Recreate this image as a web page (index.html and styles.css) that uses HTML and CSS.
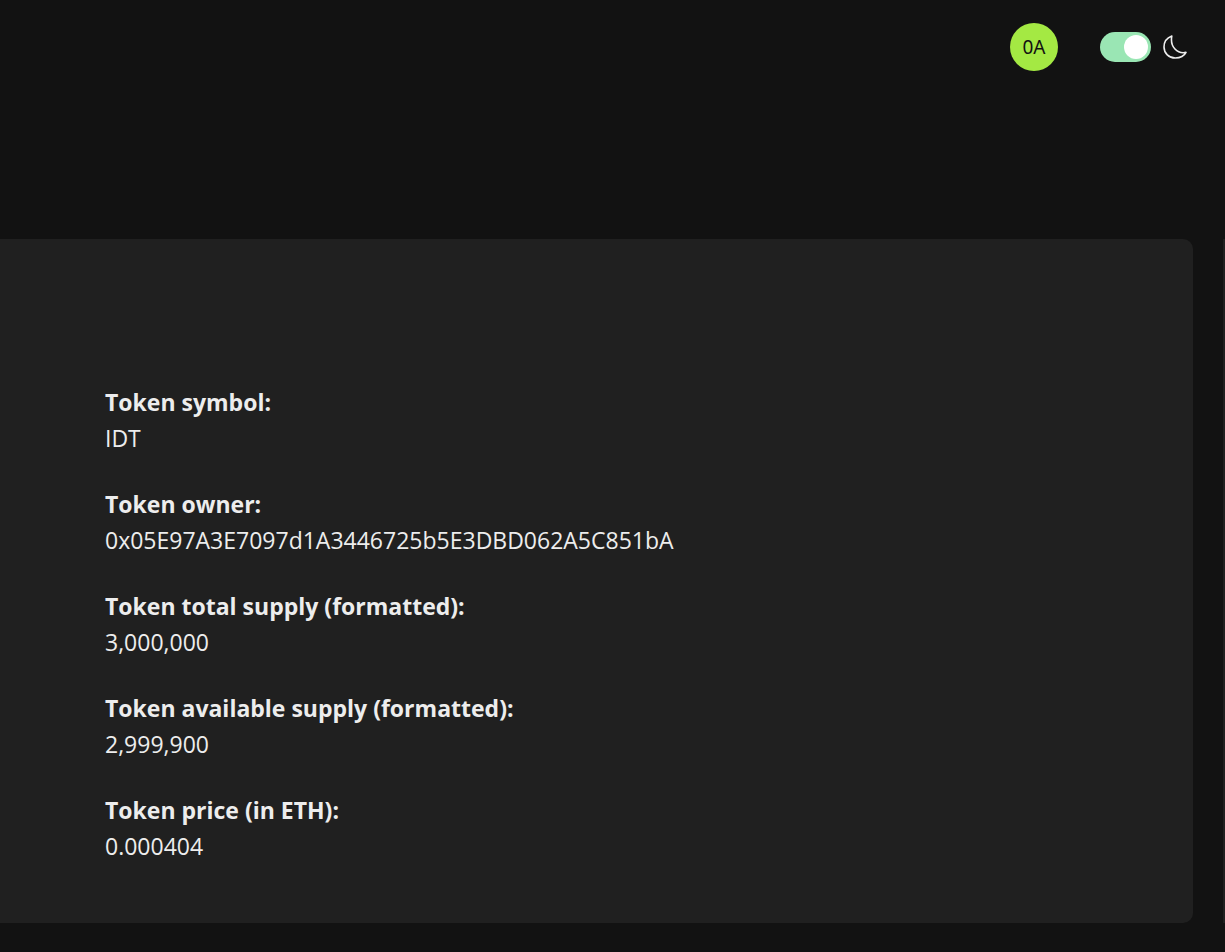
FILE: index.html
```html
<!DOCTYPE html>
<html lang="en">
<head>
<meta charset="utf-8">
<meta name="viewport" content="width=device-width, initial-scale=1">
<title>Token details</title>
<link rel="stylesheet" href="styles.css">
</head>
<body>
<header class="topbar">
  <button class="avatar" type="button">0A</button>
  <label class="theme">
    <input class="switch" type="checkbox" role="switch" aria-label="Dark theme" checked>
    <svg class="moon" viewBox="0 0 24 24" aria-hidden="true"><path d="M8.800 1C4 2.800 1 7 1 12C1 18.200 6 23 12.200 23C17 23 21.200 21 23 17.400C14.500 19.200 6.800 12 8.800 1Z"/></svg>
  </label>
</header>
<main class="slides">
  <section class="card">
    <dl class="facts">
      <div><dt>Token symbol:</dt><dd>IDT</dd></div>
      <div><dt>Token owner:</dt><dd>0x05E97A3E7097d1A3446725b5E3DBD062A5C851bA</dd></div>
      <div><dt>Token total supply (formatted):</dt><dd>3,000,000</dd></div>
      <div><dt>Token available supply (formatted):</dt><dd>2,999,900</dd></div>
      <div><dt>Token price (in ETH):</dt><dd>0.000404</dd></div>
    </dl>
  </section>
  <div class="next-card"></div>
</main>
</body>
</html>
```
FILE: styles.css
```css
* { box-sizing: border-box; }
body {
  margin: 0;
  min-height: 100vh;
  background: #121212;
  color: #ededed;
  font-family: "Segoe UI", "Open Sans", "Noto Sans", sans-serif;
}
.topbar {
  display: flex;
  justify-content: flex-end;
  align-items: center;
  gap: 42px;
  padding: 23px 38px 0 0;
}
.avatar {
  width: 48px;
  height: 48px;
  padding: 0;
  border: 0;
  border-radius: 50%;
  background: #a4e943;
  color: #121212;
  font: 400 19px "Noto Sans", sans-serif;
}
.theme {
  display: flex;
  align-items: center;
  gap: 12px;
}
.switch {
  appearance: none;
  display: flex;
  justify-content: flex-end;
  width: 51px;
  height: 30px;
  margin: 0;
  padding: 3px;
  border-radius: 15px;
  background: #9ae6b4;
}
.switch::before {
  content: "";
  width: 24px;
  height: 24px;
  border-radius: 50%;
  background: #fff;
}
.moon {
  width: 24px;
  height: 24px;
  fill: none;
  stroke: #ededed;
  stroke-width: 1.6;
  stroke-linejoin: round;
}
.slides {
  display: flex;
  gap: 30px;
  margin-top: 168px;
  overflow: hidden;
}
.card {
  flex: 1;
  padding: 145px 105px 59px;
  border-radius: 0 10px 10px 0;
  background: #202020;
}
.next-card {
  width: 2px;
  background: #202020;
}
.facts {
  display: grid;
  gap: 30px;
  margin: 0;
  font-size: 23px;
  line-height: 36px;
}
.facts dt { font-weight: 700; }
.facts dd { margin: 0; }
```
